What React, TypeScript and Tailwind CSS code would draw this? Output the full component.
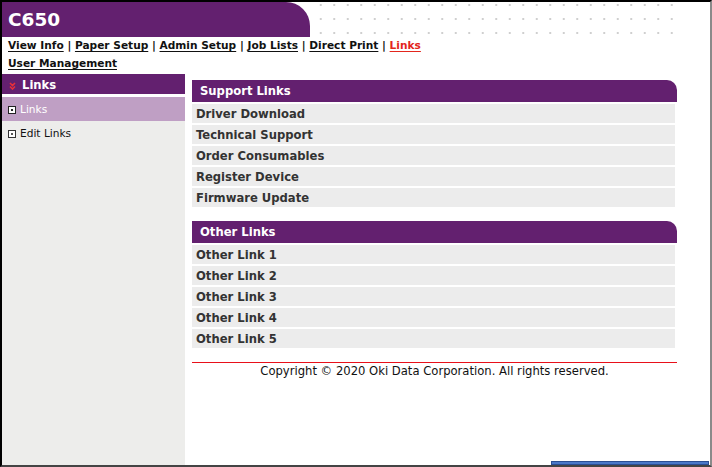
import React from "react";

const F = { fontFamily: '"DejaVu Sans", Verdana, sans-serif' };

function Box({ dark }: { dark?: boolean }) {
  return (
    <span
      className={`inline-flex items-center justify-center w-[8px] h-[8px] border ${
        dark ? "border-[#222] bg-white" : "border-[#333] bg-white"
      }`}
    >
      <span className={`w-[2px] h-[2px] ${dark ? "bg-[#222]" : "bg-[#555]"}`} />
    </span>
  );
}

function Section({ title, items }: { title: string; items: string[] }) {
  return (
    <div className="flex flex-col w-[485px]">
      <div className="h-[22px] bg-[#63206f] rounded-tr-[10px] flex items-center pl-[8px] pt-[1px] text-white font-bold text-[11.6px]">
        {title}
      </div>
      <div className="flex flex-col gap-[2px] mt-[2px] w-[483px]">
        {items.map((t) => (
          <div key={t} className="h-[19px] bg-[#ececec] flex items-center pl-[4px] pt-[2px] text-[#333] font-bold text-[11.6px]">
            {t}
          </div>
        ))}
      </div>
    </div>
  );
}

export default function App() {
  const nav = ["View Info", "Paper Setup", "Admin Setup", "Job Lists", "Direct Print"];
  return (
    <div style={F} className="relative w-[712px] h-[467px] bg-white overflow-hidden border-l-2 border-t-2 border-black border-r-2 border-r-[#8a8a8a] border-b-2 border-b-[#444] flex flex-col">
      {/* header band */}
      <div className="flex h-[35px] shrink-0">
        <div className="w-[308px] bg-[#63206f] rounded-tr-[24px] flex items-center pl-[6px] text-white font-bold text-[18.5px]">
          C650
        </div>
        <div className="ml-[4px] w-[362px] h-[35px] bg-[radial-gradient(circle,#cfcfcf_0.8px,transparent_1.2px)] bg-[length:13.5px_14px] bg-[position:0px_-4px]" />
      </div>
      {/* nav */}
      <div className="pl-[6px] -mt-[1px] text-[10.6px] font-bold text-[#111] leading-[18px]">
        <div>
          {nav.map((n) => (
            <React.Fragment key={n}>
              <span className="underline underline-offset-2">{n}</span>
              <span> | </span>
            </React.Fragment>
          ))}
          <span className="underline underline-offset-2 text-[#e3261d]">Links</span>
        </div>
        <div>
          <span className="underline underline-offset-2">User Management</span>
        </div>
      </div>
      {/* body */}
      <div className="flex flex-1 mt-[2px]">
        <div className="w-[183px] bg-[#ededeb] flex flex-col">
          <div className="h-[20px] bg-[#63206f] flex items-center pl-[7px] pt-[3px] gap-[6px] text-white font-bold text-[11.6px]">
            <svg width="7" height="8" viewBox="0 0 7 8">
              <path d="M1 1 L3.5 3.5 L6 1 M1 4.5 L3.5 7 L6 4.5" stroke="#e8303a" strokeWidth="1.6" fill="none" />
            </svg>
            <span>Links</span>
          </div>
          <div className="h-[3px] bg-white" />
          <div className="h-[24px] bg-[#bf9fc4] flex items-center pl-[6px] pt-[1px] gap-[4px] text-white text-[10.6px]">
            <Box dark />
            <span>Links</span>
          </div>
          <div className="h-[26px] flex items-center pl-[6px] gap-[4px] text-[#111] text-[10.6px]">
            <Box />
            <span>Edit Links</span>
          </div>
        </div>
        <div className="flex-1 pl-[7px] pt-[6px] flex flex-col">
          <Section
            title="Support Links"
            items={["Driver Download", "Technical Support", "Order Consumables", "Register Device", "Firmware Update"]}
          />
          <div className="h-[14px]" />
          <Section title="Other Links" items={["Other Link 1", "Other Link 2", "Other Link 3", "Other Link 4", "Other Link 5"]} />
          <div className="mt-[14px] w-[485px] h-[1px] bg-[#e8101a]" />
          <div className="w-[485px] text-center text-[11.6px] text-[#111]">
            Copyright © 2020 Oki Data Corporation. All rights reserved.
          </div>
        </div>
      </div>
      <div className="absolute left-[549px] bottom-0 w-[158px] h-[4px] bg-[#4a78c8] border border-[#2b4f94]" />
    </div>
  );
}
